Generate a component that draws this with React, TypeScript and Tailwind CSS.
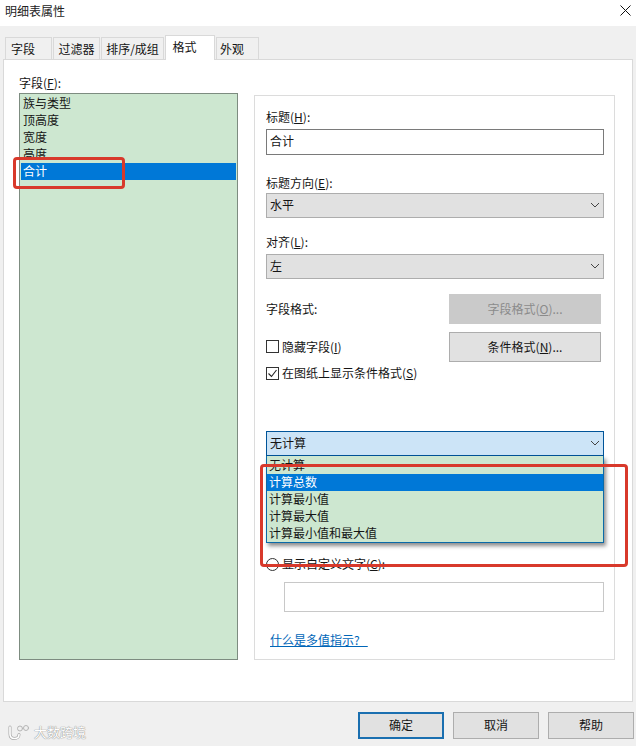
const RED_BOX = "absolute border-[3px] border-[#d8392b] rounded-[4px]";

function Chevron() {
  return (
    <svg width="10" height="6" viewBox="0 0 10 6" className="shrink-0">
      <path d="M1 1l4 4 4-4" fill="none" stroke="#444" strokeWidth="1" />
    </svg>
  );
}

function Tab({ label, width, active, left }: { label: string; width: string; active?: boolean; left?: boolean }) {
  if (active) {
    return (
      <div className={`${width} h-[25px] -mb-px z-10 pb-[4px] pr-[11px] bg-white border border-b-0 border-[#d9d9d9] flex items-center justify-center`}>
        {label}
      </div>
    );
  }
  return (
    <div className={`${width} h-[22px] ${left ? "pr-[11px]" : ""} bg-[#f0f0f0] border border-b-0 border-[#d9d9d9] flex items-center justify-center`}>
      {label}
    </div>
  );
}

function Select({ value }: { value: string }) {
  return (
    <div className="h-[25px] bg-[#e1e1e1] border border-[#adadad] flex items-center justify-between pl-[3px] pr-[3px] pb-[2px]">
      <span>{value}</span>
      <Chevron />
    </div>
  );
}

function Label({ text, hotkey }: { text: string; hotkey: string }) {
  return (
    <div className="h-[17px]">
      {text}(<u>{hotkey}</u>):
    </div>
  );
}

function Checkbox({ checked }: { checked?: boolean }) {
  return (
    <div className="w-[13px] h-[13px] bg-white border border-[#333] flex items-center justify-center shrink-0">
      {checked && (
        <svg width="11" height="11" viewBox="0 0 11 11">
          <path d="M1.5 5.5l3 3 5-6.5" fill="none" stroke="#222" strokeWidth="1.1" />
        </svg>
      )}
    </div>
  );
}

const FIELDS = ["族与类型", "顶高度", "宽度", "高度", "合计"];
const CALCS = ["无计算", "计算总数", "计算最小值", "计算最大值", "计算最小值和最大值"];

export default function App() {
  return (
    <div className="relative w-[636px] h-[746px] overflow-hidden bg-[#f0f0f0] text-[12px] leading-[15px] text-[#151515] font-['Noto_Sans_CJK_SC',sans-serif]">
      {/* Title bar */}
      <div className="h-[26px] bg-white flex items-center justify-between pl-[5px] pr-[5px] pb-[6px]">
        <span className="text-[#222]">明细表属性</span>
        <svg width="11" height="11" viewBox="0 0 11 11">
          <path d="M0.5 0.5l10 10M10.5 0.5l-10 10" stroke="#111" strokeWidth="1" />
        </svg>
      </div>

      {/* Tabs */}
      <div className="h-[33px] flex items-end pl-[5px] gap-px">
        <Tab label="字段" width="w-[47px]" left />
        <Tab label="过滤器" width="w-[47px]" />
        <Tab label="排序/成组" width="w-[63px]" />
        <Tab label="格式" width="w-[50px]" active />
        <Tab label="外观" width="w-[43px]" left />
      </div>

      {/* Tab panel */}
      <div className="ml-[3px] w-[630px] h-[643px] bg-white border border-[#d9d9d9] pl-[15px] pt-[15px] flex gap-[16px]">
        <div className="w-[219px] shrink-0">
          <Label text="字段" hotkey="F" />
          <div className="mt-px h-[567px] bg-[#cde7d0] border border-[#7d8c80] p-px">
            {FIELDS.map((f) => (
              <div key={f} className={`h-[17px] pl-[2px] ${f === "合计" ? "bg-[#0078d7] text-white" : ""}`}>
                {f}
              </div>
            ))}
          </div>
        </div>

        <div className="w-[361px] h-[565px] mt-[20px] border border-[#dcdcdc] pl-[11px] pt-[13px]">
          <div className="w-[338px]">
            <Label text="标题" hotkey="H" />
            <div className="mt-[3px] h-[26px] border border-[#7a7a7a] flex items-center pl-[3px] pb-[4px]">合计</div>

            <div className="mt-[20px]">
              <Label text="标题方向" hotkey="E" />
            </div>
            <div className="mt-px">
              <Select value="水平" />
            </div>

            <div className="mt-[16px]">
              <Label text="对齐" hotkey="L" />
            </div>
            <div className="mt-[3px]">
              <Select value="左" />
            </div>

            <div className="mt-[15px] h-[30px] flex items-center justify-between pr-[3px]">
              <span className="mb-[2px]">字段格式:</span>
              <div className="w-[152px] h-[30px] bg-[#cacaca] text-[#8b8b8b] flex items-center justify-center pb-[2px]">
                <span>字段格式(<u>O</u>)...</span>
              </div>
            </div>

            <div className="mt-[8px] h-[30px] flex items-start justify-between pr-[3px]">
              <div className="mt-[7px] flex items-center gap-[3px]">
                <Checkbox />
                <span>隐藏字段(<u>I</u>)</span>
              </div>
              <div className="w-[152px] h-[30px] bg-[#e1e1e1] border border-[#adadad] flex items-center justify-center pb-[2px]">
                <span>条件格式(<u>N</u>)...</span>
              </div>
            </div>

            <div className="mt-[3px] h-[17px] flex items-center gap-[3px]">
              <Checkbox checked />
              <span className="mb-[2px]">在图纸上显示条件格式(<u>S</u>)</span>
            </div>

            <div className="relative mt-[49px]">
              <div className="h-[25px] bg-[#cce4f7] border border-[#005499] flex items-center justify-between pl-[3px] pr-[3px] pb-[2px]">
                <span>无计算</span>
                <Chevron />
              </div>
              {/* Open dropdown */}
              <div className="absolute left-0 top-full w-full h-[87px] bg-[#cde7d0] border border-t-0 border-[#0a6aa8] pt-px z-10 shadow-[2px_3px_4px_rgba(0,0,0,0.45)]">
                {CALCS.map((c) => (
                  <div key={c} className={`h-[17px] pl-[2px] ${c === "计算总数" ? "bg-[#0078d7] text-white" : ""}`}>
                    {c}
                  </div>
                ))}
              </div>
            </div>

            <div className="mt-[100px] h-[17px] flex items-center gap-[3px]">
              <div className="w-[13px] h-[13px] rounded-full bg-white border border-[#333] shrink-0" />
              <span className="mb-[2px]">显示自定义文字(<u>C</u>):</span>
            </div>

            <div className="mt-[9px] ml-[18px] h-[30px] border border-[#c8c8c8]" />

            <div className="mt-[20px] ml-[4px] h-[17px]">
              <a className="text-[#0066b8] underline whitespace-pre">什么是多值指示?   </a>
            </div>
          </div>
        </div>
      </div>

      {/* Footer buttons */}
      <div className="mt-[10px] flex justify-end gap-[9px] pr-[2px]">
        <div className="w-[86px] h-[27px] pb-[2px] bg-[#e1e1e1] border-2 border-[#1a6fb0] flex items-center justify-center">确定</div>
        <div className="w-[86px] h-[27px] pb-[2px] bg-[#e1e1e1] border border-[#adadad] flex items-center justify-center">取消</div>
        <div className="w-[86px] h-[27px] pb-[2px] bg-[#e1e1e1] border border-[#adadad] flex items-center justify-center">帮助</div>
      </div>

      {/* Red annotation boxes */}
      <div className={`${RED_BOX} left-[13px] top-[157px] w-[112px] h-[32px]`} />
      <div className={`${RED_BOX} left-[260px] top-[464px] w-[368px] h-[103px] z-20`} />

      {/* Watermark */}
      <div className="absolute left-[7px] top-[724px] flex items-center gap-[3px] text-white text-[13px] leading-[16px] [text-shadow:0_0_1px_#8a8a8a,0_0_1px_#8a8a8a]">
        <svg width="24" height="15" viewBox="0 0 24 15">
          <g fill="none" strokeLinecap="round">
            <path d="M3 2v7c0 3 2 4.500 4.500 4.500S12 12 12 9.500" stroke="#a8a8a8" strokeWidth="3" />
            <path d="M3 2v7c0 3 2 4.500 4.500 4.500S12 12 12 9.500" stroke="#fff" strokeWidth="1.600" />
            <circle cx="13" cy="3.500" r="2.500" stroke="#b5b5b5" strokeWidth="1" />
            <circle cx="19" cy="3" r="2.500" stroke="#b5b5b5" strokeWidth="1" />
          </g>
        </svg>
        <span>大数跨境</span>
      </div>
    </div>
  );
}
